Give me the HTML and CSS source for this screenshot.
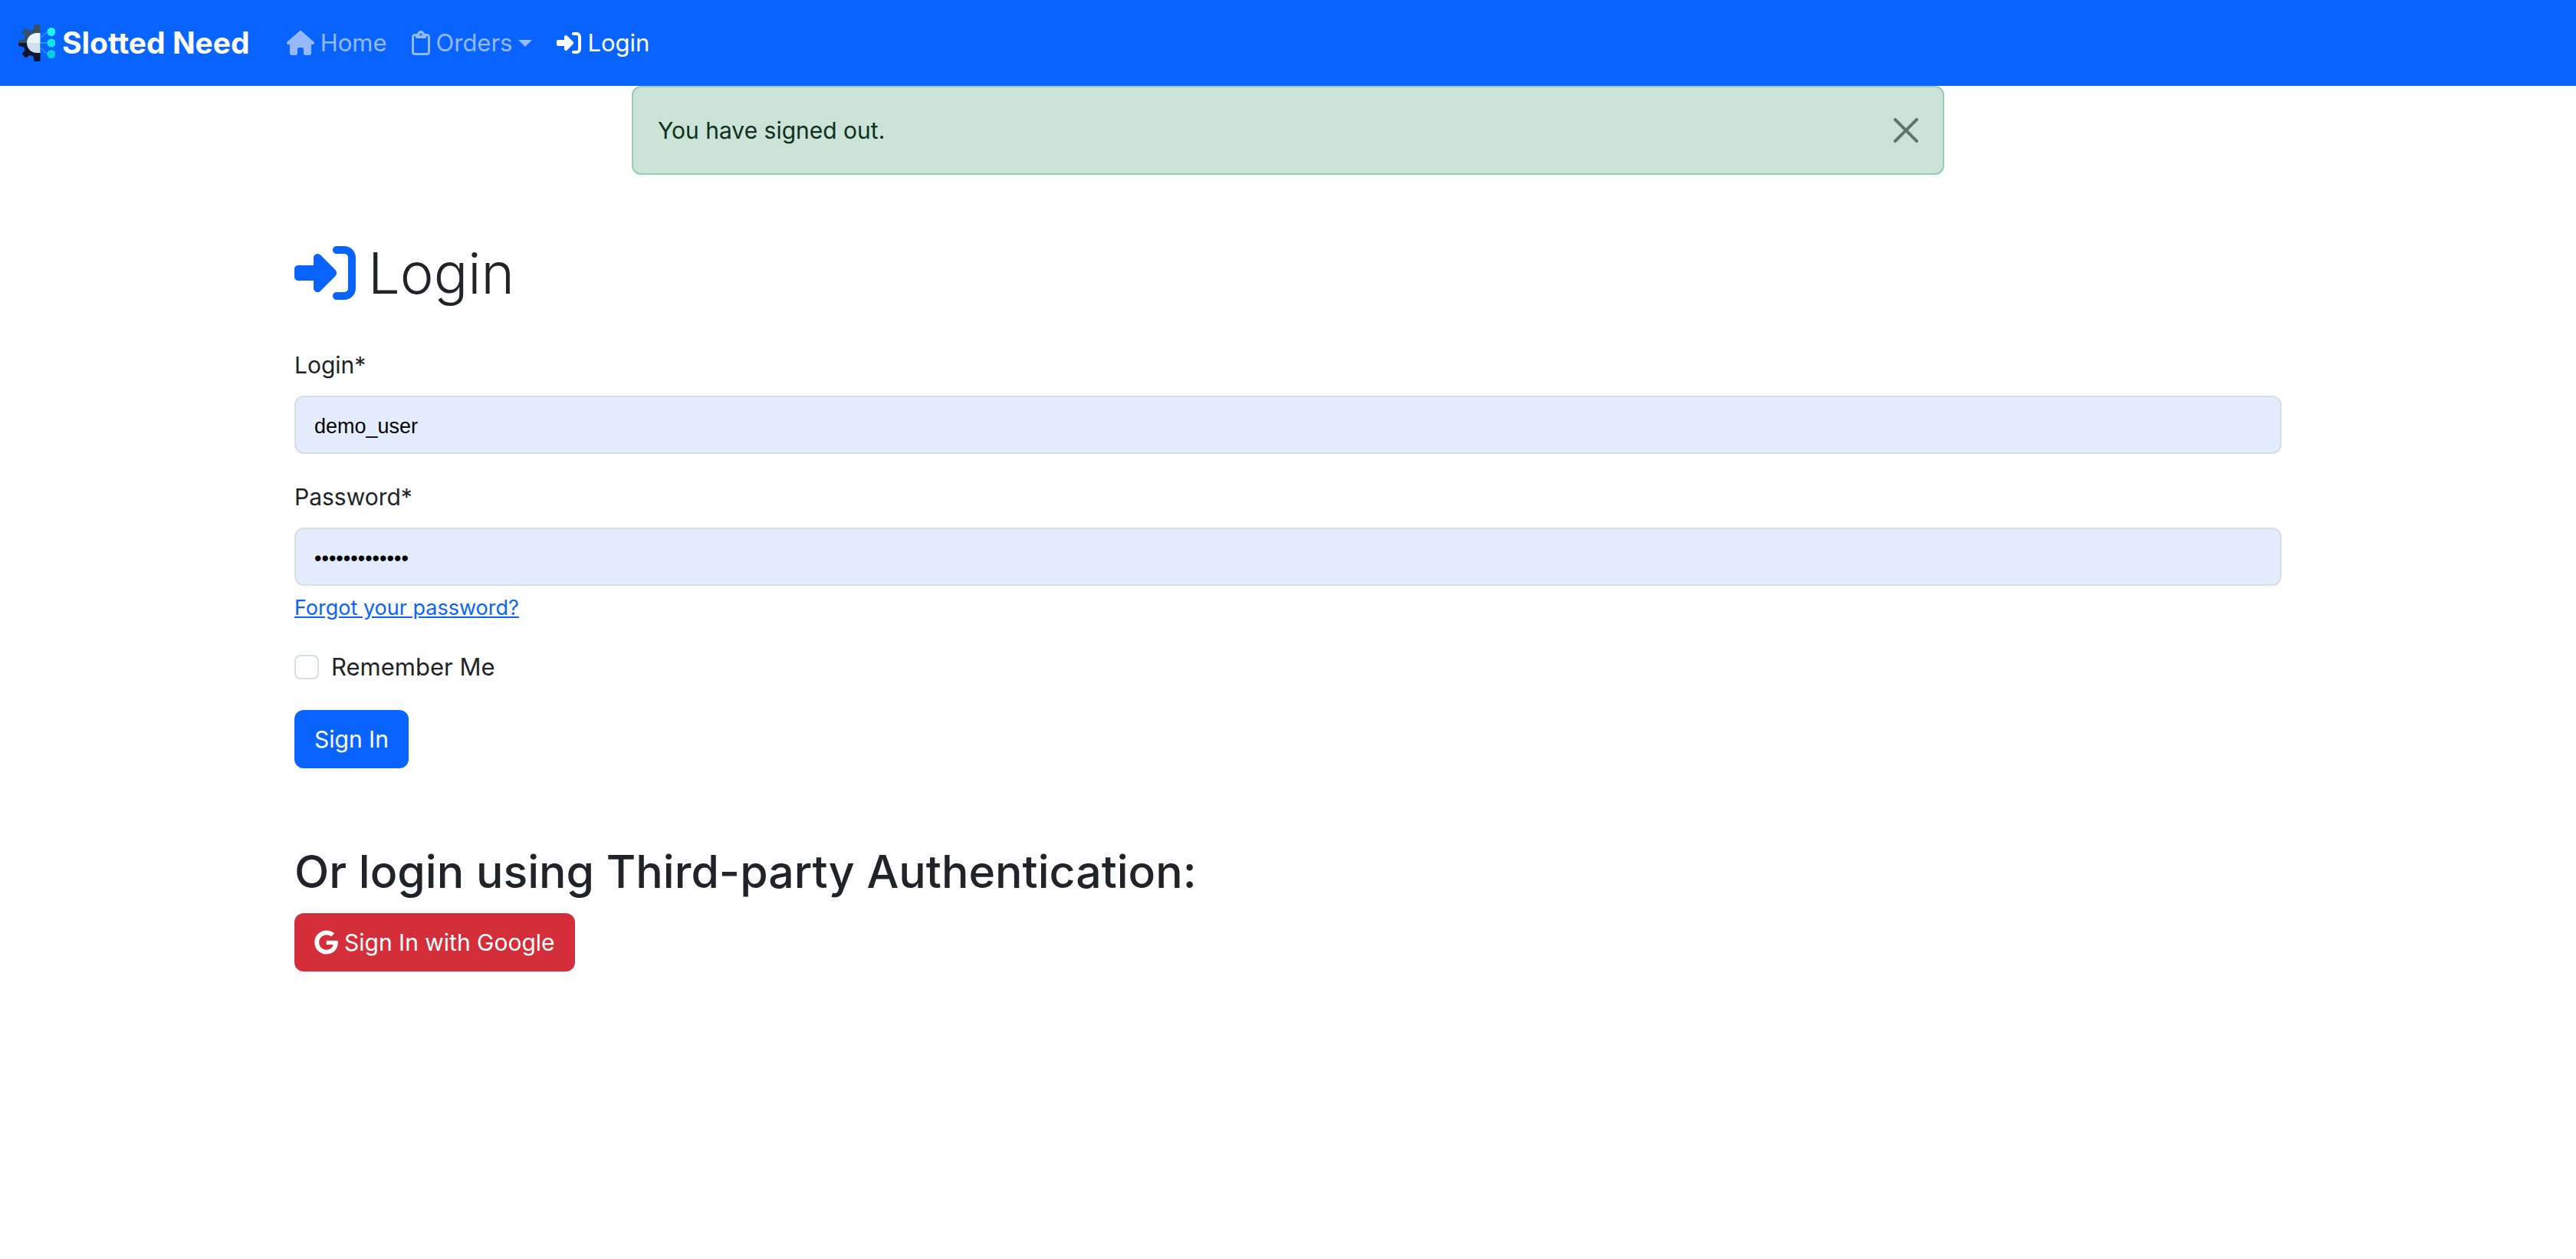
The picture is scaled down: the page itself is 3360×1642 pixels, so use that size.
FILE: index.html
```html
<!DOCTYPE html>
<html lang="en">
<head>
  <meta charset="utf-8">
  <meta name="viewport" content="width=device-width, initial-scale=1">
  <title>Slotted Need</title>
  <link rel="stylesheet" href="styles.css">
</head>
<body>
  <svg class="sprite" aria-hidden="true">
    <symbol id="icon-login" viewBox="0 0 512 512"><path d="M217.9 105.9L340.7 228.7c7.2 7.2 11.3 17.1 11.3 27.3s-4.1 20.1-11.3 27.3L217.9 406.1c-6.4 6.4-15 9.9-24 9.9c-18.7 0-33.9-15.2-33.9-33.9l0-62.1L32 320c-17.7 0-32-14.3-32-32l0-64c0-17.7 14.3-32 32-32l128 0 0-62.1c0-18.7 15.2-33.9 33.9-33.9c9 0 17.6 3.6 24 9.9zM352 416l64 0c17.7 0 32-14.3 32-32l0-256c0-17.7-14.3-32-32-32l-64 0c-17.7 0-32-14.3-32-32s14.3-32 32-32l64 0c53 0 96 43 96 96l0 256c0 53-43 96-96 96l-64 0c-17.7 0-32-14.3-32-32s14.3-32 32-32z"/></symbol>
  </svg>

  <nav class="navbar">
    <a class="brand" href="#">
      <svg class="brand-logo" viewBox="0 0 48 48" aria-hidden="true">
        <path fill="#345168" d="M0 24V21L7 19.500L8.500 15L4.500 9.500L9.500 4.500L15 8L19.500 6.500L20.500 0H28.500V24z"/>
        <path fill="#0f1631" d="M0 24V28L7 29.500L8.500 33L4.500 38.500L9.500 43.500L15 40L19.500 41.500L20.500 48H28.500V24z"/>
        <path fill="#ecf4fa" d="M11 24a13 13 0 0 1 13-13h4.500v13z"/>
        <path fill="#cfdff0" d="M11 24a13 13 0 0 0 13 13h4.500V24z"/>
        <g fill="none" stroke="#1199f0" stroke-width="1.500"><path d="M29 17C33 15 34 9.500 40 9.500"/><path d="M29 24h10" stroke="#0cb5ec"/><path d="M29 31c4 1 5 7.500 11 7.500"/></g>
        <circle cx="43" cy="9.500" r="5.500" fill="#1df5ee"/>
        <circle cx="43" cy="24" r="5.500" fill="#12e5ea"/>
        <circle cx="43" cy="38.500" r="5.500" fill="#06cfe6"/>
      </svg>
      <span>Slotted Need</span>
    </a>
    <ul class="nav">
      <li><a class="nav-link" href="#">
        <svg class="icon-home" viewBox="0 0 576 512" aria-hidden="true"><path d="M575.8 255.5c0 18-15 32.1-32 32.1h-32l.7 160.2c0 2.700-.2 5.400-.5 8.100V472c0 22.100-17.900 40-40 40H456c-1.100 0-2.200 0-3.300-.1c-1.400 .1-2.800 .1-4.200 .1H416 392c-22.100 0-40-17.900-40-40V448 384c0-17.700-14.300-32-32-32H256c-17.700 0-32 14.300-32 32v64 24c0 22.100-17.900 40-40 40H160 128.100c-1.500 0-3-.1-4.500-.2c-1.200 .1-2.400 .2-3.600 .2H104c-22.100 0-40-17.900-40-40V360c0-.9 0-1.900 .1-2.800V287.600H32c-18 0-32-14-32-32.100c0-9 3-17 10-24L266.400 8c7-7 15-8 22-8s15 2 21 7L564.800 231.500c8 7 12 15 11 24z"/></svg>
        <span>Home</span></a></li>
      <li><a class="nav-link" href="#">
        <svg class="icon-clipboard" viewBox="0 0 384 512" aria-hidden="true"><path d="M280 64h40c35.300 0 64 28.700 64 64V448c0 35.300-28.700 64-64 64H64c-35.300 0-64-28.700-64-64V128C0 92.700 28.700 64 64 64h40 9.600C121 27.500 153.300 0 192 0s71 27.500 78.400 64H280zM64 112c-8.800 0-16 7.200-16 16V448c0 8.800 7.200 16 16 16H320c8.800 0 16-7.200 16-16V128c0-8.800-7.200-16-16-16H304v24c0 13.300-10.700 24-24 24H192 104c-13.300 0-24-10.700-24-24V112H64zm128-8a24 24 0 1 0 0-48 24 24 0 1 0 0 48z"/></svg>
        <span>Orders</span>
        <svg class="icon-caret" viewBox="0 0 18 9" aria-hidden="true"><path d="M0 0h18L9 9z"/></svg></a></li>
      <li><a class="nav-link active" href="#" aria-current="page">
        <svg class="icon-login" aria-hidden="true"><use href="#icon-login"/></svg>
        <span>Login</span></a></li>
    </ul>
  </nav>

  <div class="container messages">
    <div class="alert" role="alert">
      <span>You have signed out.</span>
      <button class="btn-close" type="button" aria-label="Close">
        <svg viewBox="0 0 16 16" aria-hidden="true"><path d="M.293.293a1 1 0 0 1 1.414 0L8 6.586 14.293.293a1 1 0 1 1 1.414 1.414L9.414 8l6.293 6.293a1 1 0 0 1-1.414 1.414L8 9.414l-6.293 6.293a1 1 0 0 1-1.414-1.414L6.586 8 .293 1.707a1 1 0 0 1 0-1.414z"/></svg>
      </button>
    </div>
  </div>

  <main class="container">
    <h1 class="title"><svg class="title-icon" aria-hidden="true"><use href="#icon-login"/></svg><span>Login</span></h1>

    <form class="login-form">
      <div class="field">
        <label for="login">Login*</label>
        <input class="control" type="text" id="login" value="demo_user">
      </div>
      <div class="field">
        <label for="password">Password*</label>
        <input class="control" type="password" id="password" value="demo_password">
        <a class="forgot" href="#">Forgot your password?</a>
      </div>
      <div class="check">
        <input type="checkbox" id="remember">
        <label for="remember">Remember Me</label>
      </div>
      <button class="btn btn-primary" type="submit">Sign In</button>
    </form>

    <section class="social">
      <h2>Or login using Third-party Authentication:</h2>
      <button class="btn btn-danger" type="button">
        <svg class="icon-google" viewBox="0 0 488 512" aria-hidden="true"><path d="M488 261.800C488 403.300 391.100 504 248 504 110.800 504 0 393.200 0 256S110.800 8 248 8c66.800 0 123 24.500 166.300 64.900l-67.500 64.900C258.500 52.600 94.300 116.600 94.300 256c0 86.500 69.100 156.600 153.700 156.600 98.200 0 135-70.400 140.800-106.900H248v-85.300h236.100c2.300 12.700 3.900 24.900 3.900 41.400z"/></svg>
        <span>Sign In with Google</span>
      </button>
    </section>
  </main>
</body>
</html>
```
FILE: styles.css
```css
* {
  box-sizing: border-box;
}

body {
  margin: 0;
  background: #fff;
  color: #202428;
  font-family: Inter, "Liberation Sans", sans-serif;
  font-size: 31px;
  line-height: 48px;
}

svg {
  display: block;
  flex: none;
  fill: currentColor;
}

.sprite {
  position: absolute;
  width: 0;
  height: 0;
}

.container {
  width: 100%;
  max-width: 2640px;
  margin: 0 auto;
  padding: 0 24px;
}

/* Navigation bar */
.navbar {
  display: flex;
  align-items: center;
  gap: 32px;
  padding: 16px 24px;
  background: #0964ff;
}

.brand {
  display: flex;
  align-items: center;
  gap: 9px;
  color: #fff;
  font-size: 39px;
  font-weight: 700;
  line-height: 60px;
  text-decoration: none;
}

.brand-logo {
  width: 48px;
  height: 48px;
}

.nav {
  display: flex;
  margin: 0;
  padding: 0;
  list-style: none;
}

.nav-link {
  display: flex;
  align-items: center;
  gap: 8px;
  padding: 16px;
  color: #94b9ff;
  text-decoration: none;
}

.nav-link.active {
  color: #fff;
}

.icon-home {
  width: 36px;
  height: 32px;
}

.icon-clipboard {
  width: 24px;
  height: 32px;
}

.icon-login {
  width: 32px;
  height: 32px;
}

.icon-caret {
  width: 18px;
  height: 9px;
}

/* Message banner */
.alert {
  display: flex;
  align-items: center;
  justify-content: space-between;
  max-width: 1712px;
  margin: 0 auto 76px;
  padding: 32px;
  border: 2px solid #9bcab6;
  border-radius: 12px;
  background: #cce3d8;
  color: #0c3120;
  font-size: 30px;
}

.btn-close {
  padding: 0;
  border: 0;
  background: none;
  color: #66716c;
}

.btn-close svg {
  width: 32px;
  height: 32px;
}

/* Login form */
.title {
  display: flex;
  align-items: center;
  gap: 16px;
  margin: 0 0 44px;
  font-size: 74px;
  font-weight: 300;
  line-height: 104px;
}

.title-icon {
  width: 80px;
  height: 80px;
  color: #0964ff;
}

.login-form {
  display: flex;
  flex-direction: column;
  align-items: flex-start;
  gap: 32px;
}

.field {
  display: flex;
  flex-direction: column;
  align-items: flex-start;
  width: 100%;
  font-size: 30px;
}

.control {
  width: 100%;
  height: 76px;
  margin-top: 16px;
  padding: 4px 24px 0;
  border: 2px solid #d9dee3;
  border-radius: 12px;
  background: #e4edff;
  color: #000;
  font-family: "Liberation Sans", Arial, sans-serif;
  font-size: 27px;
}

.forgot {
  margin-top: 8px;
  color: #0964ff;
  font-size: 27px;
  line-height: 42px;
}

.check {
  display: flex;
  align-items: center;
  gap: 16px;
}

.check input {
  appearance: none;
  width: 32px;
  height: 32px;
  margin: 0;
  border: 2px solid #d9dee3;
  border-radius: 8px;
  background: #fff;
}

.btn {
  display: flex;
  align-items: center;
  gap: 8px;
  padding: 14px 26px;
  border: 0;
  border-radius: 12px;
  color: #fff;
  font: inherit;
  font-size: 30px;
}

.btn-primary {
  background: #0964ff;
}

.btn-danger {
  background: #d52e3b;
}

.icon-google {
  width: 31px;
  height: 32px;
}

.social {
  margin-top: 96px;
}

.social h2 {
  margin: 0 0 16px;
  font-size: 59px;
  font-weight: 500;
  line-height: 77px;
}
```
